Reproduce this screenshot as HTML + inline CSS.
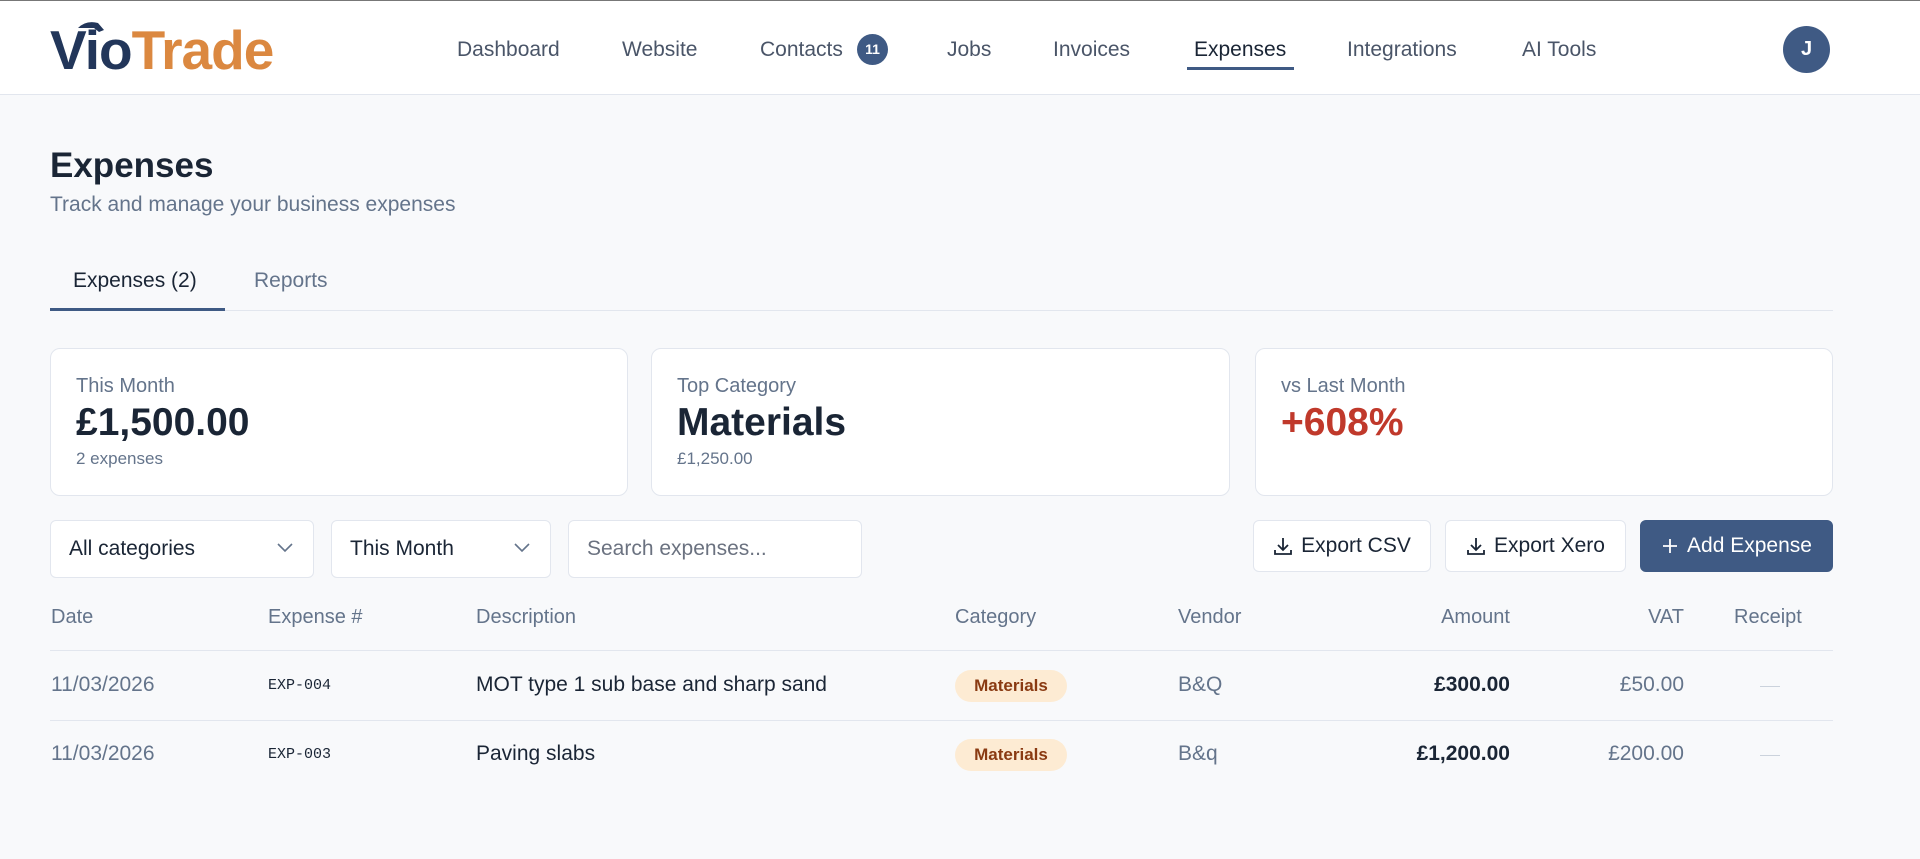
<!DOCTYPE html>
<html><head><meta charset="utf-8"><style>
*{box-sizing:border-box;margin:0;padding:0}
body{width:1920px;height:859px;overflow:hidden;background:#f8f9fb;font-family:"Liberation Sans",Arial,sans-serif;color:#1a2535;position:relative}
.abs{position:absolute}
.hdr{position:absolute;left:0;top:0;width:1920px;height:95px;background:#fff;border-top:1px solid #777;border-bottom:1px solid #e2e6ee}
.nav{position:absolute;top:37px;font-size:21px;color:#4a5568;white-space:nowrap}
.card{position:absolute;top:348px;height:148px;background:#fff;border:1px solid #e2e6ee;border-radius:10px}
.lbl{position:absolute;left:25px;top:26px;font-size:20px;color:#64748b}
.val{position:absolute;left:25px;top:52px;font-size:39px;font-weight:bold;color:#1a2535}
.sub{position:absolute;left:25px;top:100px;font-size:17px;color:#64748b}
.sel{position:absolute;top:520px;height:58px;background:#fff;border:1px solid #e2e6ee;border-radius:6px;font-size:21px;padding:16px 18px;color:#1a2535}
.chev{position:absolute;right:20px;top:22px}
.btn{position:absolute;top:520px;height:52px;border:1px solid #e2e6ee;border-radius:6px;background:#fff;font-size:21px;display:flex;align-items:center;justify-content:center;gap:8px}
.th{position:absolute;top:606px;font-size:20px;color:#64748b}
.td{position:absolute;font-size:21px}
.line{position:absolute;left:50px;width:1783px;height:1px;background:#e2e6ee}
.badge{position:absolute;left:955px;width:112px;height:32px;border-radius:16px;background:#fdebd3;color:#8a3a12;font-size:17px;font-weight:bold;text-align:center;line-height:32px}
.mono{font-family:"Liberation Mono",monospace;font-size:15px}
</style></head><body>
<div class="hdr">
 <div class="abs" style="left:50px;top:17px;font-size:55px;font-weight:bold;letter-spacing:-1px;white-space:nowrap"><span style="color:#22365a">Vio</span><span style="color:#db8840">Trade</span></div>
 <svg class="abs" style="left:74px;top:19px" width="34" height="18" viewBox="0 0 34 18"><path d="M4 8 Q12 0 24 3 L30 10 L25 12 L20 8 Z" fill="#22365a"/></svg>
 <div class="nav" style="left:457px">Dashboard</div>
 <div class="nav" style="left:622px">Website</div>
 <div class="nav" style="left:760px">Contacts</div>
 <div class="abs" style="left:857px;top:33px;width:31px;height:31px;border-radius:50%;background:#3f5a84;color:#fff;font-size:14px;font-weight:bold;text-align:center;line-height:31px">11</div>
 <div class="nav" style="left:947px">Jobs</div>
 <div class="nav" style="left:1053px">Invoices</div>
 <div class="nav" style="left:1194px;color:#1a2535">Expenses</div>
 <div class="abs" style="left:1187px;top:66px;width:107px;height:3px;background:#3f5a84"></div>
 <div class="nav" style="left:1347px">Integrations</div>
 <div class="nav" style="left:1522px">AI Tools</div>
 <div class="abs" style="left:1783px;top:25px;width:47px;height:47px;border-radius:50%;background:#3f5a84;color:#fff;font-size:20px;font-weight:bold;text-align:center;line-height:47px">J</div>
</div>
<div class="abs" style="left:50px;top:146px;font-size:35px;font-weight:bold">Expenses</div>
<div class="abs" style="left:50px;top:193px;font-size:21px;color:#64748b">Track and manage your business expenses</div>
<div class="abs" style="left:73px;top:269px;font-size:21px;color:#1a2535">Expenses (2)</div>
<div class="abs" style="left:254px;top:269px;font-size:21px;color:#64748b">Reports</div>
<div class="abs" style="left:50px;top:310px;width:1783px;height:1px;background:#e2e6ee"></div>
<div class="abs" style="left:50px;top:308px;width:175px;height:3px;background:#3f5a84"></div>

<div class="card" style="left:50px;width:578px"><div class="lbl">This Month</div><div class="val">£1,500.00</div><div class="sub">2 expenses</div></div>
<div class="card" style="left:651px;width:579px"><div class="lbl">Top Category</div><div class="val">Materials</div><div class="sub">£1,250.00</div></div>
<div class="card" style="left:1255px;width:578px"><div class="lbl">vs Last Month</div><div class="val" style="color:#c0392b">+608%</div></div>

<div class="sel" style="left:50px;width:264px">All categories<svg class="chev" width="16" height="10" viewBox="0 0 16 10"><path d="M1 1l7 7 7-7" fill="none" stroke="#64748b" stroke-width="1.6"/></svg></div>
<div class="sel" style="left:331px;width:220px">This Month<svg class="chev" width="16" height="10" viewBox="0 0 16 10"><path d="M1 1l7 7 7-7" fill="none" stroke="#64748b" stroke-width="1.6"/></svg></div>
<div class="sel" style="left:568px;width:294px;color:#6b7280">Search expenses...</div>

<div class="btn" style="left:1253px;width:178px"><svg width="20" height="20" viewBox="0 0 20 20"><path d="M10 2v11M5 9l5 5 5-5M2 14v4h16v-4" fill="none" stroke="#1a2535" stroke-width="1.8"/></svg>Export CSV</div>
<div class="btn" style="left:1445px;width:181px"><svg width="20" height="20" viewBox="0 0 20 20"><path d="M10 2v11M5 9l5 5 5-5M2 14v4h16v-4" fill="none" stroke="#1a2535" stroke-width="1.8"/></svg>Export Xero</div>
<div class="btn" style="left:1640px;width:193px;background:#3f5a84;border-color:#3f5a84;color:#fff"><svg width="18" height="18" viewBox="0 0 18 18"><path d="M9 2v14M2 9h14" stroke="#fff" stroke-width="1.8"/></svg>Add Expense</div>

<div class="th" style="left:51px">Date</div>
<div class="th" style="left:268px">Expense #</div>
<div class="th" style="left:476px">Description</div>
<div class="th" style="left:955px">Category</div>
<div class="th" style="left:1178px">Vendor</div>
<div class="th" style="left:1410px;width:100px;text-align:right">Amount</div>
<div class="th" style="left:1584px;width:100px;text-align:right">VAT</div>
<div class="th" style="left:1734px">Receipt</div>
<div class="line" style="top:650px"></div>

<div class="td" style="left:51px;top:673px;color:#64748b">11/03/2026</div>
<div class="td mono" style="left:268px;top:677px">EXP-004</div>
<div class="td" style="left:476px;top:673px">MOT type 1 sub base and sharp sand</div>
<div class="badge" style="top:670px">Materials</div>
<div class="td" style="left:1178px;top:673px;color:#64748b">B&amp;Q</div>
<div class="td" style="left:1380px;width:130px;top:673px;text-align:right;font-weight:bold">£300.00</div>
<div class="td" style="left:1564px;width:120px;top:673px;text-align:right;color:#64748b">£50.00</div>
<div class="abs" style="left:1760px;top:686px;width:20px;height:1px;background:#cbd2dc"></div>
<div class="line" style="top:720px"></div>

<div class="td" style="left:51px;top:742px;color:#64748b">11/03/2026</div>
<div class="td mono" style="left:268px;top:746px">EXP-003</div>
<div class="td" style="left:476px;top:742px">Paving slabs</div>
<div class="badge" style="top:739px">Materials</div>
<div class="td" style="left:1178px;top:742px;color:#64748b">B&amp;q</div>
<div class="td" style="left:1380px;width:130px;top:742px;text-align:right;font-weight:bold">£1,200.00</div>
<div class="td" style="left:1564px;width:120px;top:742px;text-align:right;color:#64748b">£200.00</div>
<div class="abs" style="left:1760px;top:755px;width:20px;height:1px;background:#cbd2dc"></div>
</body></html>
